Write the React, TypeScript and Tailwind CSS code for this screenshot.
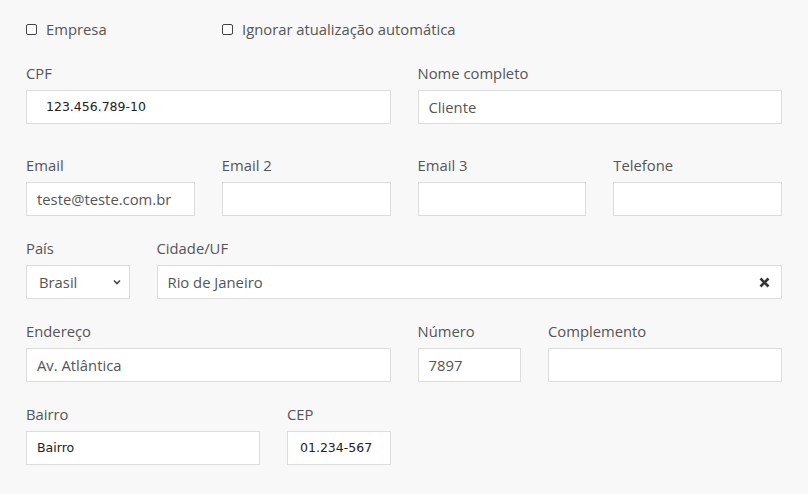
import React from 'react';

const ubuntu = { fontFamily: '"Open Sans", "Noto Sans", sans-serif' };

function Check({ label }: { label: string }) {
  return (
    <label className="flex items-center gap-[9px] text-[14.8px] text-[#555]">
      <span className="w-[11px] h-[11px] rounded-[2px] border border-[#444] bg-white" />
      {label}
    </label>
  );
}

function Field({
  label,
  value = '',
  span,
  alt = false,
  pad = 'pl-[10px]',
}: {
  label: string;
  value?: string;
  span: string;
  alt?: boolean;
  pad?: string;
}) {
  return (
    <div className={`${span} flex flex-col`}>
      <div className="h-[20px] leading-[20px] text-[14.8px] text-[#555] mb-[7px]">{label}</div>
      <div
        className={`h-[34px] bg-white border border-[#dcdcdc] flex items-center ${pad} ${
          alt ? 'text-[12.5px] text-[#222] font-["DejaVu_Sans",sans-serif]' : 'text-[14.8px] text-[#555]'
        }`}
      >
        {value}
      </div>
    </div>
  );
}

export default function App() {
  return (
    <div className="w-[808px] h-[494px] bg-[#f8f8f8] px-[26px]" style={ubuntu}>
      {/* checkboxes */}
      <div className="flex h-[58px] items-center pt-[1px]">
        <div className="w-[196px]">
          <Check label="Empresa" />
        </div>
        <Check label="Ignorar atualização automática" />
      </div>

      <div className="grid grid-cols-12 gap-x-[27px] pt-[5px]">
        <Field label="CPF" value="123.456.789-10" span="col-span-6" alt pad="pl-[19px]" />
        <Field label="Nome completo" value="Cliente" span="col-span-6" />
      </div>

      <div className="grid grid-cols-12 gap-x-[27px] mt-[31px]">
        <Field label="Email" value="teste@teste.com.br" span="col-span-3" />
        <Field label="Email 2" span="col-span-3" />
        <Field label="Email 3" span="col-span-3" />
        <Field label="Telefone" span="col-span-3" />
      </div>

      <div className="grid grid-cols-12 gap-x-[27px] mt-[22px]">
        <div className="col-span-2 flex flex-col">
          <div className="h-[20px] leading-[20px] text-[14.8px] text-[#555] mb-[7px]">País</div>
          <div className="h-[34px] bg-white border border-[#dcdcdc] flex items-center justify-between pl-[12px] pr-[7px] text-[14.8px] text-[#555]">
            Brasil
            <svg width="10" height="10" viewBox="0 0 10 10" className="text-[#444]">
              <path d="M2 3.5 L5 6.5 L8 3.5" fill="none" stroke="currentColor" strokeWidth="1.6" />
            </svg>
          </div>
        </div>
        <div className="col-span-10 flex flex-col">
          <div className="h-[20px] leading-[20px] text-[14.8px] text-[#555] mb-[7px]">Cidade/UF</div>
          <div className="h-[34px] bg-white border border-[#dcdcdc] flex items-center justify-between pl-[10px] pr-[11px] text-[14.8px] text-[#555]">
            Rio de Janeiro
            <svg width="11" height="11" viewBox="0 0 11 11" className="text-[#333]">
              <path d="M1.5 1.5 L9.5 9.5 M9.5 1.5 L1.5 9.5" stroke="currentColor" strokeWidth="2.6" />
            </svg>
          </div>
        </div>
      </div>

      <div className="grid grid-cols-12 gap-x-[27px] mt-[22px]">
        <Field label="Endereço" value="Av. Atlântica" span="col-span-6" />
        <Field label="Número" value="7897" span="col-span-2" />
        <Field label="Complemento" span="col-span-4" />
      </div>

      <div className="grid grid-cols-12 gap-x-[27px] mt-[22px]">
        <Field label="Bairro" value="Bairro" span="col-span-4" alt />
        <Field label="CEP" value="01.234-567" span="col-span-2" alt pad="pl-[12px]" />
      </div>
    </div>
  );
}
